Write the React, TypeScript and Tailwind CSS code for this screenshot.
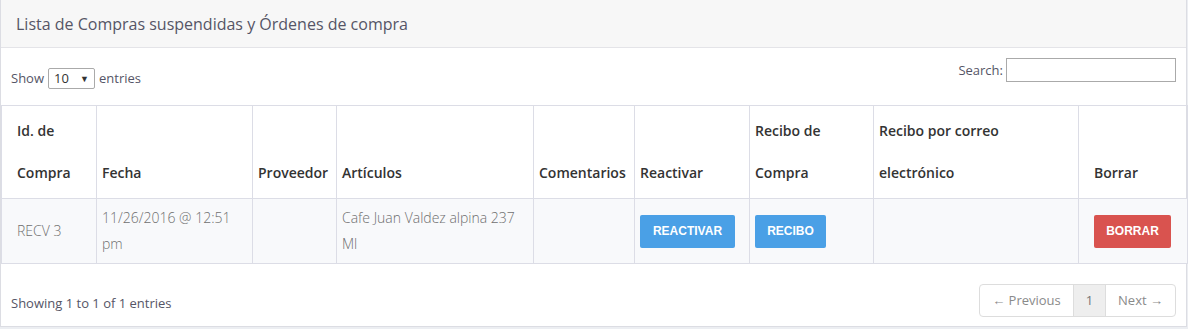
import React from "react";

const th = "border border-[#dcdde6] align-bottom text-left font-semibold text-[#333] leading-[42px] py-[4px] px-[5px]";
const td = "border border-[#dcdde6] align-middle text-left font-light text-[#6f6f6f] leading-[26px] py-[6px] px-[5px]";

export default function App() {
  return (
    <div className="w-[1188px] h-[329px] bg-[#eceef2] overflow-hidden" style={{ fontFamily: '"Open Sans", "Noto Sans", sans-serif' }}>
      <div className="w-[1187px] h-[327px] bg-white border-l border-r border-b border-[#dcdde3] flex flex-col">
        <div className="h-[48px] bg-[#f7f7f7] border-b border-[#e4e4e8] flex items-center pl-[15px]">
          <span className="text-[16px] text-[#555566]">Lista de Compras suspendidas y Órdenes de compra</span>
        </div>
        <div className="flex justify-between px-[10px] h-[57px]">
          <div className="pt-[20px] flex items-center gap-[4px] h-[41px] text-[13px] text-[#555566]">
            <span>Show</span>
            <div className="w-[47px] h-[21px] border border-[#aaa] rounded-[2px] flex items-center justify-between px-[5px] text-[#333] text-[13px]">
              <span>10</span>
              <span className="text-[9px] text-[#333]">▼</span>
            </div>
            <span>entries</span>
          </div>
          <div className="pt-[10px] flex items-start gap-[3px] text-[13px] text-[#555566]">
            <span className="leading-[24px]">Search:</span>
            <div className="w-[170px] h-[24px] border border-[#aaa]" />
          </div>
        </div>
        <table className="border-collapse w-[1186px] text-[14px] table-fixed">
          <colgroup>
            <col className="w-[95px]" />
            <col className="w-[156px]" />
            <col className="w-[84px]" />
            <col className="w-[197px]" />
            <col className="w-[101px]" />
            <col className="w-[115px]" />
            <col className="w-[124px]" />
            <col className="w-[205px]" />
            <col className="w-[109px]" />
          </colgroup>
          <thead>
            <tr>
              <th className={th + " pl-[15px]"}>Id. de<br />Compra</th>
              <th className={th}>Fecha</th>
              <th className={th}>Proveedor</th>
              <th className={th}>Artículos</th>
              <th className={th}>Comentarios</th>
              <th className={th}>Reactivar</th>
              <th className={th}>Recibo de<br />Compra</th>
              <th className={th}>Recibo por correo<br />electrónico</th>
              <th className={th + " pl-[15px]"}>Borrar</th>
            </tr>
          </thead>
          <tbody>
            <tr className="bg-[#f8f9fb]">
              <td className={td + " pl-[15px]"}>RECV 3</td>
              <td className={td}>11/26/2016 @ 12:51<br />pm</td>
              <td className={td}></td>
              <td className={td}>Cafe Juan Valdez alpina 237<br />Ml</td>
              <td className={td}></td>
              <td className={td}>
                <button className="h-[33px] px-[10px] w-[95px] bg-[#4aa0e6] text-white rounded-[2px] text-[12px] font-bold leading-[33px]" style={{ fontFamily: '"Liberation Sans", Arial, sans-serif' }}>REACTIVAR</button>
              </td>
              <td className={td}>
                <button className="h-[33px] w-[71px] bg-[#4aa0e6] text-white rounded-[2px] text-[12px] font-bold leading-[33px]" style={{ fontFamily: '"Liberation Sans", Arial, sans-serif' }}>RECIBO</button>
              </td>
              <td className={td}></td>
              <td className={td + " pl-[15px]"}>
                <button className="h-[33px] w-[77px] bg-[#d9534f] text-white rounded-[2px] text-[12px] font-bold leading-[33px]" style={{ fontFamily: '"Liberation Sans", Arial, sans-serif' }}>BORRAR</button>
              </td>
            </tr>
          </tbody>
        </table>
        <div className="flex justify-between items-start px-[10px] pt-[20px]">
          <span className="text-[13px] text-[#555566] mt-[10px]">Showing 1 to 1 of 1 entries</span>
          <div className="flex h-[33px] border border-[#ddd] rounded-[4px] text-[13px] text-[#8a8a8a] overflow-hidden">
            <div className="w-[93px] flex items-center justify-center">← Previous</div>
            <div className="w-[33px] flex items-center justify-center bg-[#eeeeee] border-l border-r border-[#ddd] text-[#777]">1</div>
            <div className="w-[69px] flex items-center justify-center">Next →</div>
          </div>
        </div>
      </div>
    </div>
  );
}
